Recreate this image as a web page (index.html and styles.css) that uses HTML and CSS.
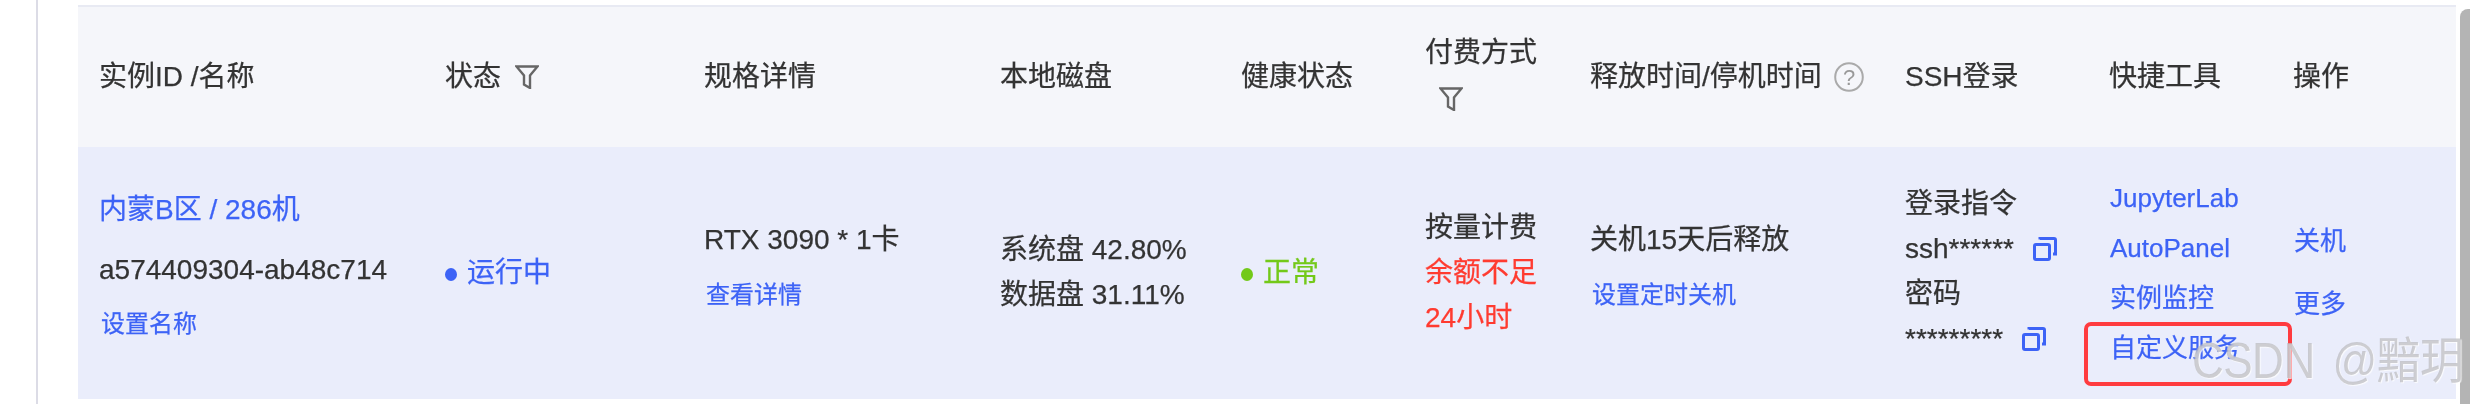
FILE: index.html
```html
<!DOCTYPE html>
<html lang="zh-CN">
<head>
<meta charset="utf-8">
<title>实例列表</title>
<link rel="stylesheet" href="styles.css">
</head>
<body>
<div class="page">
  <div class="rail"></div>
  <div class="table-wrap">
    <table class="grid">
      <colgroup>
        <col class="c1"><col class="c2"><col class="c3"><col class="c4"><col class="c5">
        <col class="c6"><col class="c7"><col class="c8"><col class="c9"><col class="c10">
      </colgroup>
      <thead>
        <tr>
          <th>实例ID /名称</th>
          <th>状态<svg class="filter" viewBox="0 0 24 24"><path d="M1.5 1.5H22.5L15 10.5V23L9 19.5V10.5Z"/></svg></th>
          <th>规格详情</th>
          <th>本地磁盘</th>
          <th>健康状态</th>
          <th class="pay-head"><div class="pay-label">付费方式</div><svg class="filter" viewBox="0 0 24 24"><path d="M1.5 1.5H22.5L15 10.5V23L9 19.5V10.5Z"/></svg></th>
          <th>释放时间/停机时间<svg class="help" viewBox="0 0 30 30"><circle cx="15" cy="15" r="13.8"/><text x="15" y="22.5" text-anchor="middle">?</text></svg></th>
          <th>SSH登录</th>
          <th>快捷工具</th>
          <th>操作</th>
        </tr>
      </thead>
      <tbody>
        <tr>
          <td>
            <div class="stack s-name">
              <a class="link">内蒙B区 / 286机</a>
              <span>a574409304-ab48c714</span>
              <a class="link small">设置名称</a>
            </div>
          </td>
          <td><span class="status run"><i class="dot"></i>运行中</span></td>
          <td>
            <div class="stack s-spec">
              <span>RTX 3090 * 1卡</span>
              <a class="link small">查看详情</a>
            </div>
          </td>
          <td>
            <div class="stack s-disk">
              <span>系统盘 42.80%</span>
              <span>数据盘 31.11%</span>
            </div>
          </td>
          <td><span class="status ok"><i class="dot"></i>正常</span></td>
          <td>
            <div class="stack s-pay">
              <span>按量计费</span>
              <span class="warn">余额不足</span>
              <span class="warn">24小时</span>
            </div>
          </td>
          <td>
            <div class="stack s-spec">
              <span>关机15天后释放</span>
              <a class="link small">设置定时关机</a>
            </div>
          </td>
          <td>
            <div class="stack s-ssh">
              <span>登录指令</span>
              <span class="row">ssh******<svg class="copy" viewBox="0 0 24 24"><path d="M7 2.5V1.5H21A1.5 1.5 0 0 1 22.5 3V17H20"/><rect x="1.5" y="7.5" width="15" height="15" rx="1.5"/></svg></span>
              <span>密码</span>
              <span class="row">*********<svg class="copy" viewBox="0 0 24 24"><path d="M7 2.5V1.5H21A1.5 1.5 0 0 1 22.5 3V17H20"/><rect x="1.5" y="7.5" width="15" height="15" rx="1.5"/></svg></span>
            </div>
          </td>
          <td>
            <div class="stack s-tool">
              <a class="link tool">JupyterLab</a>
              <a class="link tool">AutoPanel</a>
              <a class="link tool">实例监控</a>
              <a class="link tool">自定义服务</a>
            </div>
          </td>
          <td>
            <div class="stack s-op">
              <a class="link tool">关机</a>
              <a class="link tool">更多</a>
            </div>
          </td>
        </tr>
      </tbody>
    </table>
    <div class="callout"></div>
    <div class="watermark">CSDN @黯玥</div>
  </div>
  <div class="scrollbar"></div>
</div>
</body>
</html>
```

FILE: styles.css
```css
* { box-sizing: border-box; }
html, body { margin: 0; padding: 0; background: #fff; }
body {
  width: 2470px;
  height: 404px;
  overflow: hidden;
  font-family: "Liberation Sans", "Noto Sans CJK SC", sans-serif;
  color: #333;
}
.page { display: flex; height: 404px; padding-left: 36px; }
.rail { width: 2px; background: #dcdce6; margin-right: 40px; }
.table-wrap { position: relative; width: 2378px; height: 404px; padding-top: 5px; margin-right: 4px; }
.scrollbar { width: 10px; margin-top: 9px; background: #b4b4b4; border-top-left-radius: 8px; }

.grid { width: 2378px; border-collapse: collapse; table-layout: fixed; filter: blur(0.4px); -webkit-text-stroke: 0.25px currentColor; }
.c1 { width: 346px; } .c2 { width: 259px; } .c3 { width: 296px; } .c4 { width: 241px; }
.c5 { width: 184px; } .c6 { width: 165px; } .c7 { width: 315px; } .c8 { width: 204px; }
.c9 { width: 184px; } .c10 { width: 184px; }

th, td { padding: 0 0 0 21px; vertical-align: middle; white-space: nowrap; text-align: left; }
thead tr { height: 141px; background: #f5f6fa; border-top: 2px solid #e8eaf3; }
tbody tr { height: 252px; background: #eaedfb; }
th { font-size: 28px; font-weight: 400; line-height: 40px; }
td { font-size: 28px; line-height: 40px; }

.filter { width: 24px; height: 24px; margin-left: 14px; vertical-align: -3px; }
.filter path { fill: none; stroke: #666; stroke-width: 2.4; }
.pay-head { padding-bottom: 10px; }
.pay-label { height: 54px; }
.pay-head .filter { display: block; margin-left: 14px; }
.help { width: 30px; height: 30px; margin-left: 12px; vertical-align: -6px; }
.help circle { fill: none; stroke: #aaa; stroke-width: 2; }
.help text { font-size: 22px; fill: #999; font-family: "Liberation Sans", sans-serif; }

.stack { display: flex; flex-direction: column; align-items: flex-start; }
.link { color: #3d63f6; }
.small { font-size: 24px; margin-left: 2px; }
.warn { color: #ff3b30; }
.row { display: flex; align-items: center; }

.s-name { gap: 20px; padding-bottom: 13px; }
.s-name .small { margin-top: -6px; }
.s-spec { gap: 15px; padding-bottom: 11px; }
.s-disk { gap: 5px; padding-bottom: 2px; }
.s-pay { gap: 5px; }
.s-ssh { gap: 5px; padding-bottom: 3px; }
.s-tool { gap: 10px; padding-left: 1px; }
.s-op { gap: 23px; padding-bottom: 2px; padding-left: 1px; }
.tool { font-size: 26px; }

.status { display: flex; align-items: center; }
.dot { width: 12px; height: 13px; border-radius: 50%; margin-right: 10px; margin-top: 2px; background: currentColor; }
.run { color: #3d63f6; }
.ok { color: #73c919; }

.copy { width: 24px; height: 24px; margin-left: 19px; }
.copy path, .copy rect { fill: none; stroke: #3d63f6; stroke-width: 3; }

.callout {
  position: absolute;
  left: 2006px;
  top: 322px;
  width: 208px;
  height: 64px;
  border: 4px solid #ff3b3f;
  border-radius: 7px;
}
.watermark {
  position: absolute;
  left: 2114px;
  top: 333px;
  font-size: 44px;
  line-height: 56px;
  letter-spacing: -0.5px;
  word-spacing: 6px;
  white-space: nowrap;
  color: rgba(185, 185, 190, 0.7);
  text-shadow: 1px 1px 1px rgba(255, 255, 255, 0.8);
  transform: scaleY(1.12);
  filter: blur(0.3px);
}
```
